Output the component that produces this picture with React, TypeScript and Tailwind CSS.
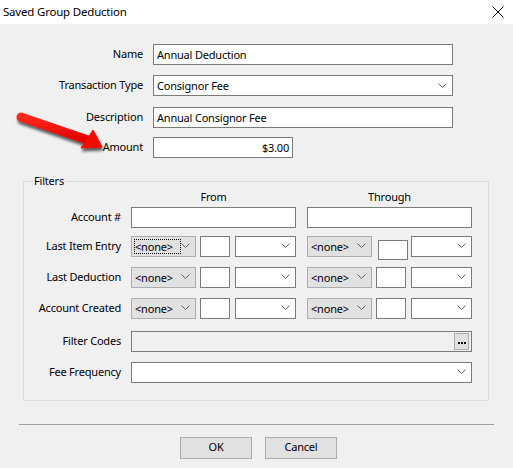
import React from "react";

const font = { fontFamily: '"Segoe UI", "Noto Sans", sans-serif' };

function Chevron() {
    return (
        <svg width="9" height="6" viewBox="0 0 9 6" className="shrink-0">
            <path d="M0.5 0.5 L4.5 4.5 L8.5 0.5" fill="none" stroke="#606060" strokeWidth="1" />
        </svg>
    );
}

function TextBox({ className = "", value = "", right = false }: { className?: string; value?: string; right?: boolean }) {
    return (
        <div
            className={
                "h-[21px] border border-[#7a7a7a] bg-white flex items-center px-[3px] " +
                (right ? "justify-end " : "") +
                className
            }
        >
            <span className="leading-none">{value}</span>
        </div>
    );
}

function Combo({ className = "", value = "" }: { className?: string; value?: string }) {
    return (
        <div className={"h-[21px] border border-[#7a7a7a] bg-white flex items-center pl-[3px] pr-[5px] " + className}>
            <span className="flex-1 leading-none">{value}</span>
            <Chevron />
        </div>
    );
}

function NoneCombo({ focused = false }: { focused?: boolean }) {
    return (
        <div className="w-[65px] h-[21px] border border-[#adadad] bg-[#e1e1e1] flex items-center pl-[2px] pr-[5px] shrink-0">
            <span
                className={
                    "flex-1 leading-none h-[15px] flex items-center pl-[1px] " +
                    (focused ? "outline outline-1 outline-dotted outline-black -outline-offset-1" : "")
                }
            >
                {"<none>"}
            </span>
            <Chevron />
        </div>
    );
}

function DateRow({ label, first = false }: { label: string; first?: boolean }) {
    return (
        <div className="flex items-start">
            <div className="w-[97px] h-[21px] flex items-center justify-end">{label}</div>
            <div className="ml-[10px] flex w-[165px]">
                <NoneCombo focused={first} />
                <div className="ml-[4px] w-[30px] h-[21px] border border-[#7a7a7a] bg-white shrink-0" />
                <Combo className="ml-[5px] w-[61px]" />
            </div>
            <div className="ml-[11px] flex items-start w-[165px]">
                <NoneCombo />
                {first ? (
                    <div className="ml-[6px] mt-[4px] w-[30px] h-[20px] border border-[#7a7a7a] bg-white shrink-0" />
                ) : (
                    <div className="ml-[4px] w-[30px] h-[21px] border border-[#7a7a7a] bg-white shrink-0" />
                )}
                <Combo className={first ? "ml-[3px] w-[61px]" : "ml-[5px] w-[61px]"} />
            </div>
        </div>
    );
}

export default function App() {
    return (
        <div className="w-[513px] h-[468px] text-[11px] tracking-[-0.2px] text-black overflow-hidden" style={font}>
            <div className="h-[24px] bg-white flex items-center justify-between pl-[3px] pr-[9px]">
                <span className="text-[11.5px]">Saved Group Deduction</span>
                <svg width="12" height="12" viewBox="0 0 12 12">
                    <path d="M0.5 0.5 L11.5 11.5 M11.5 0.5 L0.5 11.5" stroke="#000" strokeWidth="1" />
                </svg>
            </div>

            <div className="relative h-[444px] bg-[#f0f0f0] pt-[20px]">
                <div className="flex items-center">
                    <div className="w-[143px] text-right">Name</div>
                    <TextBox className="ml-[10px] w-[300px]" value="Annual Deduction" />
                </div>
                <div className="flex items-center mt-[10px]">
                    <div className="w-[143px] text-right">Transaction Type</div>
                    <Combo className="ml-[10px] w-[300px]" value="Consignor Fee" />
                </div>
                <div className="flex items-center mt-[11px]">
                    <div className="w-[143px] text-right">Description</div>
                    <TextBox className="ml-[10px] w-[300px]" value="Annual Consignor Fee" />
                </div>
                <div className="flex items-center mt-[9px]">
                    <div className="w-[143px] text-right">Amount</div>
                    <TextBox className="ml-[10px] w-[140px]" value="$3.00" right />
                </div>

                {/* red callout arrow */}
                <svg className="absolute left-[12px] top-[88px]" width="100" height="70" viewBox="0 0 100 70">
                    <defs>
                        <filter id="sh" x="-20%" y="-30%" width="140%" height="180%">
                            <feGaussianBlur in="SourceAlpha" stdDeviation="1.8" />
                            <feOffset dx="1" dy="3" result="b" />
                            <feComponentTransfer>
                                <feFuncA type="linear" slope="0.65" />
                            </feComponentTransfer>
                            <feMerge>
                                <feMergeNode />
                                <feMergeNode in="SourceGraphic" />
                            </feMerge>
                        </filter>
                        <linearGradient id="rg" x1="0" y1="0" x2="0" y2="1">
                            <stop offset="0" stopColor="#ff2a1a" />
                            <stop offset="1" stopColor="#e00000" />
                        </linearGradient>
                    </defs>
                    <g filter="url(#sh)">
                        <line x1="9" y1="5" x2="76" y2="28" stroke="url(#rg)" strokeWidth="9" strokeLinecap="round" />
                        <polygon points="81,18 90,35 69,36" fill="#f00800" stroke="#f00800" strokeWidth="1" strokeLinejoin="round" />
                    </g>
                </svg>

                <fieldset className="mx-[23px] mt-[15px] border border-[#dcdcdc] pb-[17px] w-[466px]">
                    <legend className="ml-[9px] px-[1px] leading-[16px]">Filters</legend>
                    <div className="flex">
                        <div className="w-[107px]" />
                        <div className="w-[165px] text-center">From</div>
                        <div className="ml-[11px] w-[165px] text-center">Through</div>
                    </div>
                    <div className="flex items-center mt-[1px]">
                        <div className="w-[97px] text-right">Account #</div>
                        <TextBox className="ml-[10px] w-[165px]" />
                        <TextBox className="ml-[11px] w-[165px]" />
                    </div>
                    <div className="mt-[8px]">
                        <DateRow label="Last Item Entry" first />
                    </div>
                    <div className="mt-[7px]">
                        <DateRow label="Last Deduction" />
                    </div>
                    <div className="mt-[10px]">
                        <DateRow label="Account Created" />
                    </div>
                    <div className="flex items-center mt-[12px]">
                        <div className="w-[97px] text-right">Filter Codes</div>
                        <div className="ml-[10px] w-[341px] h-[21px] border border-[#7a7a7a] bg-[#f0f0f0] flex items-center justify-end pr-[2px]">
                            <div className="w-[15px] h-[17px] border border-[#adadad] bg-[#e1e1e1] flex items-end justify-center gap-[1px] pb-[5px]">
                                <div className="w-[2px] h-[2px] bg-black" />
                                <div className="w-[2px] h-[2px] bg-black" />
                                <div className="w-[2px] h-[2px] bg-black" />
                            </div>
                        </div>
                    </div>
                    <div className="flex items-center mt-[10px]">
                        <div className="w-[97px] text-right">Fee Frequency</div>
                        <Combo className="ml-[10px] w-[341px]" />
                    </div>
                </fieldset>

                <div className="mx-[19px] mt-[23px] h-px bg-[#a0a0a0]" />

                <div className="flex justify-center gap-[13px] mt-[12px] pl-[4px]">
                    <button className="w-[72px] h-[22px] border border-[#adadad] bg-[#e1e1e1]">OK</button>
                    <button className="w-[72px] h-[22px] border border-[#adadad] bg-[#e1e1e1]">Cancel</button>
                </div>
            </div>
        </div>
    );
}
